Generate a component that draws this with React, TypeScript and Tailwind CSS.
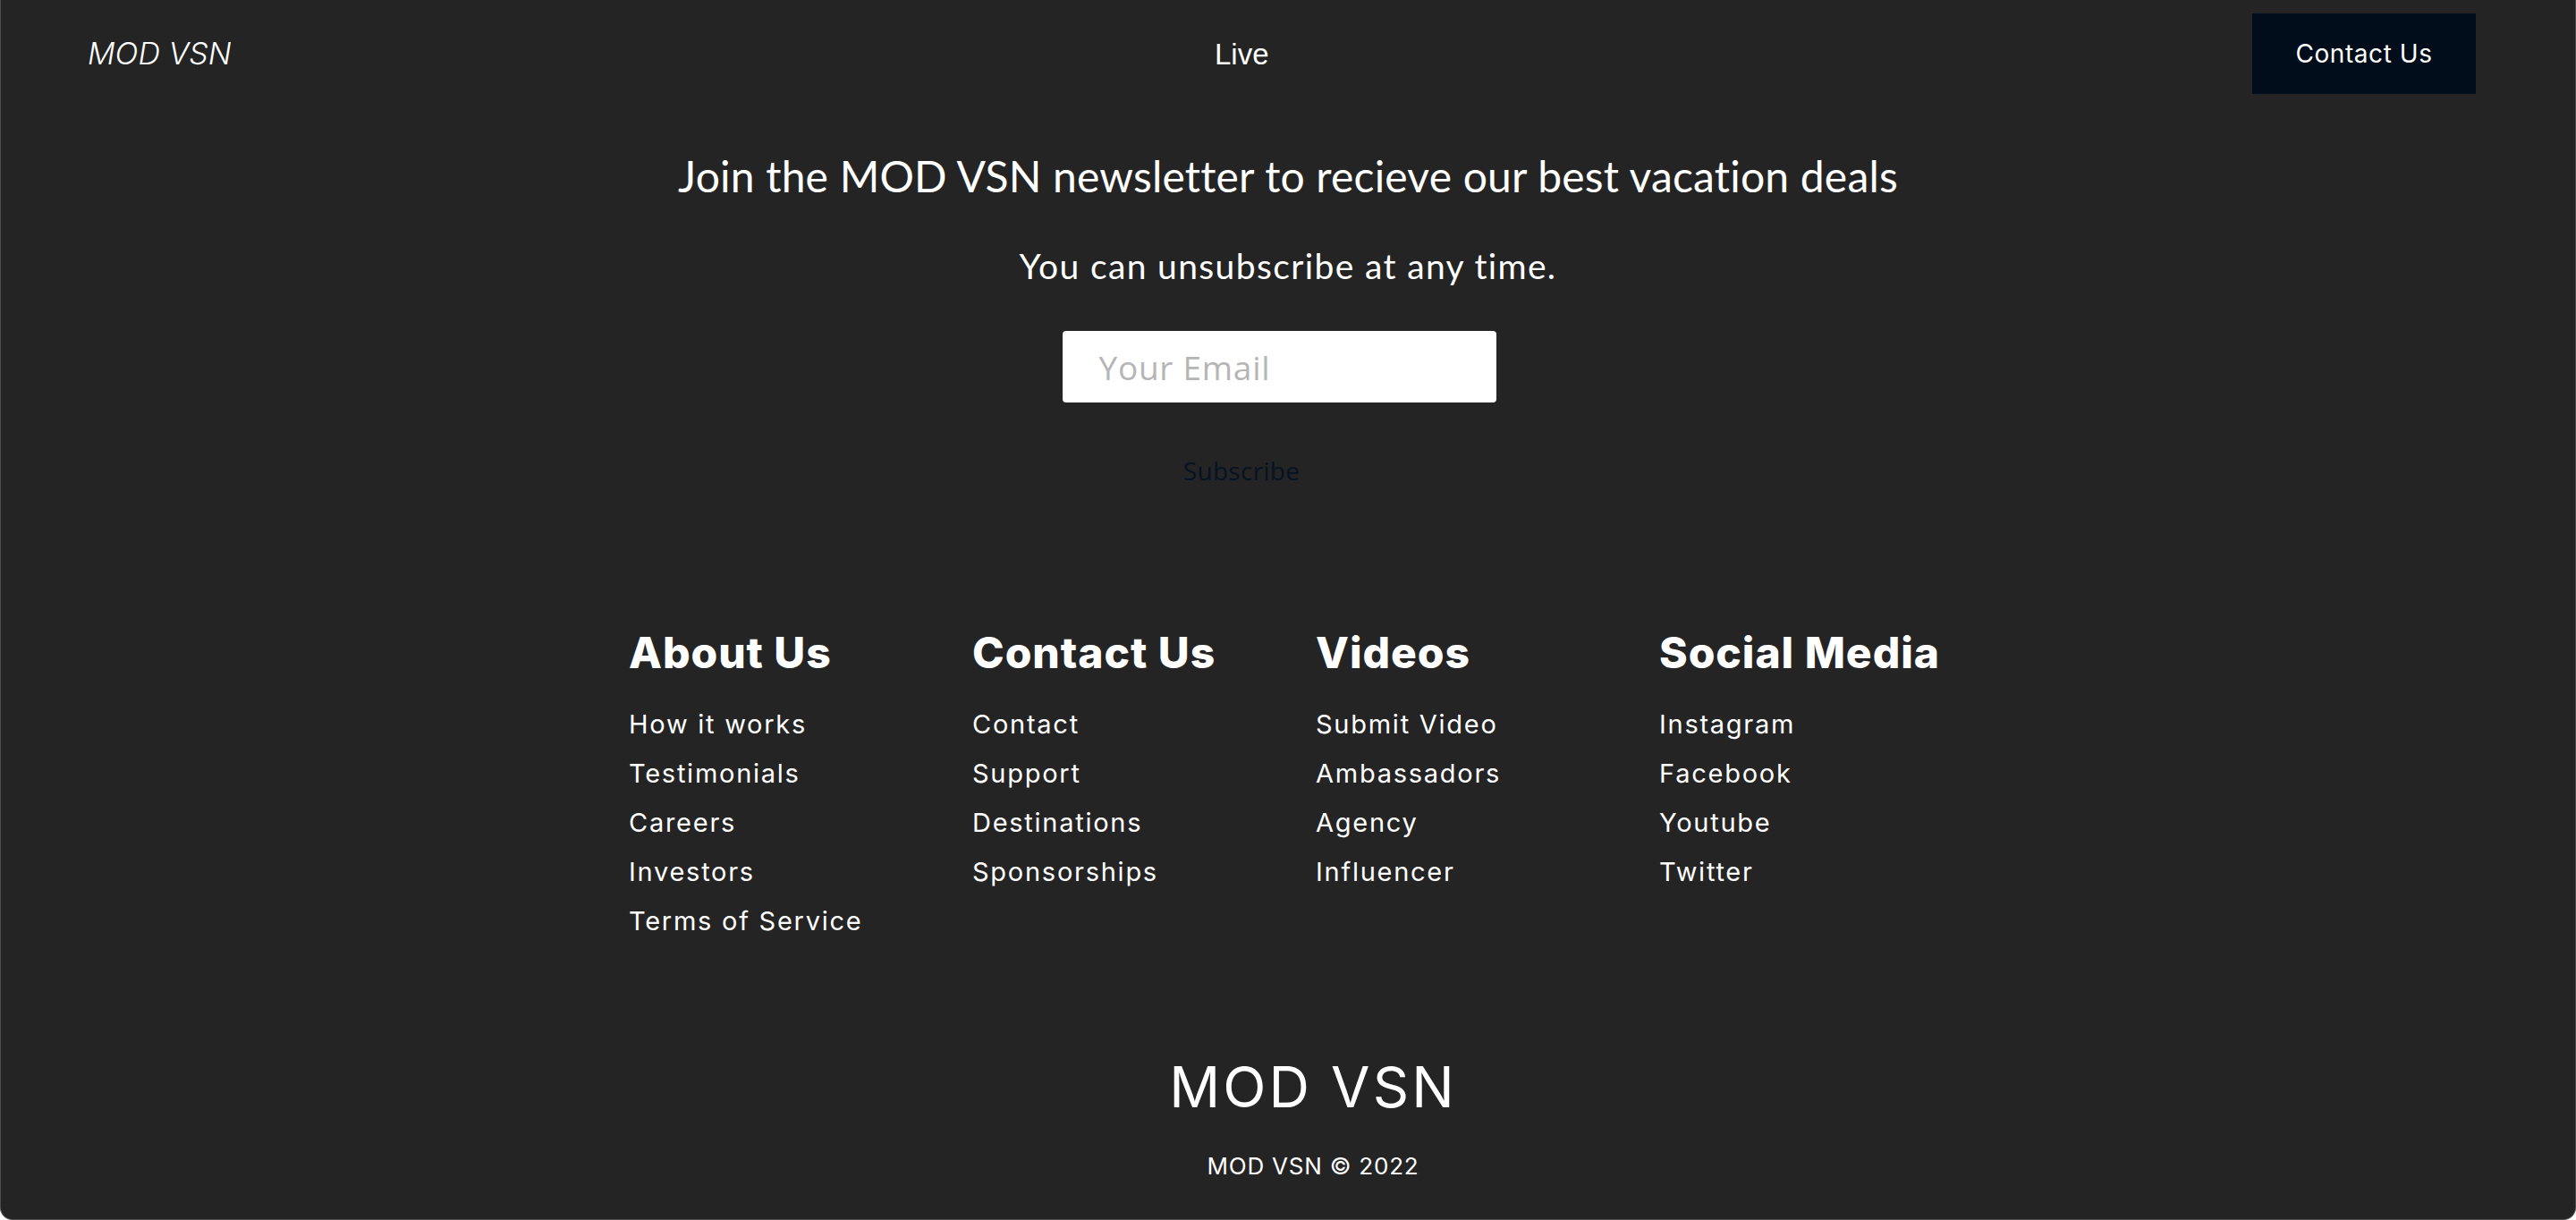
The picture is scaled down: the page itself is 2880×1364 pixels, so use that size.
import { useState } from "react"

const columns = [
  {
    title: "About Us",
    links: ["How it works", "Testimonials", "Careers", "Investors", "Terms of Service"],
  },
  {
    title: "Contact Us",
    links: ["Contact", "Support", "Destinations", "Sponsorships"],
  },
  {
    title: "Videos",
    links: ["Submit Video", "Ambassadors", "Agency", "Influencer"],
  },
  {
    title: "Social Media",
    links: ["Instagram", "Facebook", "Youtube", "Twitter"],
  },
]

function Navbar() {
  return (
    <nav className="h-[120px] flex items-center justify-between pl-[97px] pr-[111px]">
      <a href="#" className="font-['Inter'] italic font-light text-[34px] leading-none text-white">
        MOD VSN
      </a>
      <a href="#" className="font-['Liberation_Sans'] text-[33px] leading-none text-white">
        Live
      </a>
      <button className="w-[250px] h-[90px] bg-[#010d1a] text-white font-['Inter'] text-[28px] tracking-[0.02em]">
        Contact Us
      </button>
    </nav>
  )
}

function Newsletter() {
  const [email, setEmail] = useState("")

  return (
    <section className="flex flex-col items-center">
      <h2 className="mt-[53px] font-['Lato'] text-[48px] leading-none text-white tracking-[0.004em]">
        Join the MOD VSN newsletter to recieve our best vacation deals
      </h2>
      <p className="mt-[57px] font-['Lato'] text-[39px] leading-none text-white tracking-[0.035em]">
        You can unsubscribe at any time.
      </p>
      <form className="flex flex-col items-center" onSubmit={(e) => e.preventDefault()}>
        <input
          type="email"
          value={email}
          onChange={(e) => setEmail(e.target.value)}
          placeholder="Your Email"
          className="mt-[53px] mr-[20px] w-[485px] h-[80px] rounded-[4px] bg-white px-[41px] font-['Open_Sans'] text-[37px] tracking-[0.02em] text-[#222] placeholder:text-[#b5b5b5] outline-none"
        />
        <button
          type="submit"
          className="mt-[62px] mr-[104px] font-['Open_Sans'] text-[28px] leading-none text-[#061322] tracking-[0.01em]"
        >
          Subscribe
        </button>
      </form>
    </section>
  )
}

function FooterLinks() {
  return (
    <div className="flex justify-center pl-[62px] mt-[166px]">
      <div className="grid grid-cols-4 w-[1536px]">
        {columns.map((col) => (
          <div key={col.title} className="flex flex-col">
            <h3 className="font-['Inter'] font-extrabold text-[48px] leading-none text-white tracking-[0.02em]">
              {col.title}
            </h3>
            <ul className="mt-[28px]">
              {col.links.map((link) => (
                <li key={link}>
                  <a href="#" className="font-['Inter'] text-[29px] leading-[55px] text-white tracking-[0.06em]">
                    {link}
                  </a>
                </li>
              ))}
            </ul>
          </div>
        ))}
      </div>
    </div>
  )
}

export default function App() {
  return (
    <div className="h-[1364px] bg-[#242424] border-x border-b border-[#4e4e4e] rounded-b-[14px] overflow-hidden">
      <Navbar />
      <Newsletter />
      <FooterLinks />
      <footer className="flex flex-col items-center pl-[56px]">
        <div className="mt-[127px] font-['Inter'] text-[63px] leading-none text-white tracking-[0.05em]">
          MOD VSN
        </div>
        <div className="mt-[44px] font-['Inter'] text-[26px] leading-none text-white tracking-[0.03em]">
          MOD VSN © 2022
        </div>
      </footer>
    </div>
  )
}
